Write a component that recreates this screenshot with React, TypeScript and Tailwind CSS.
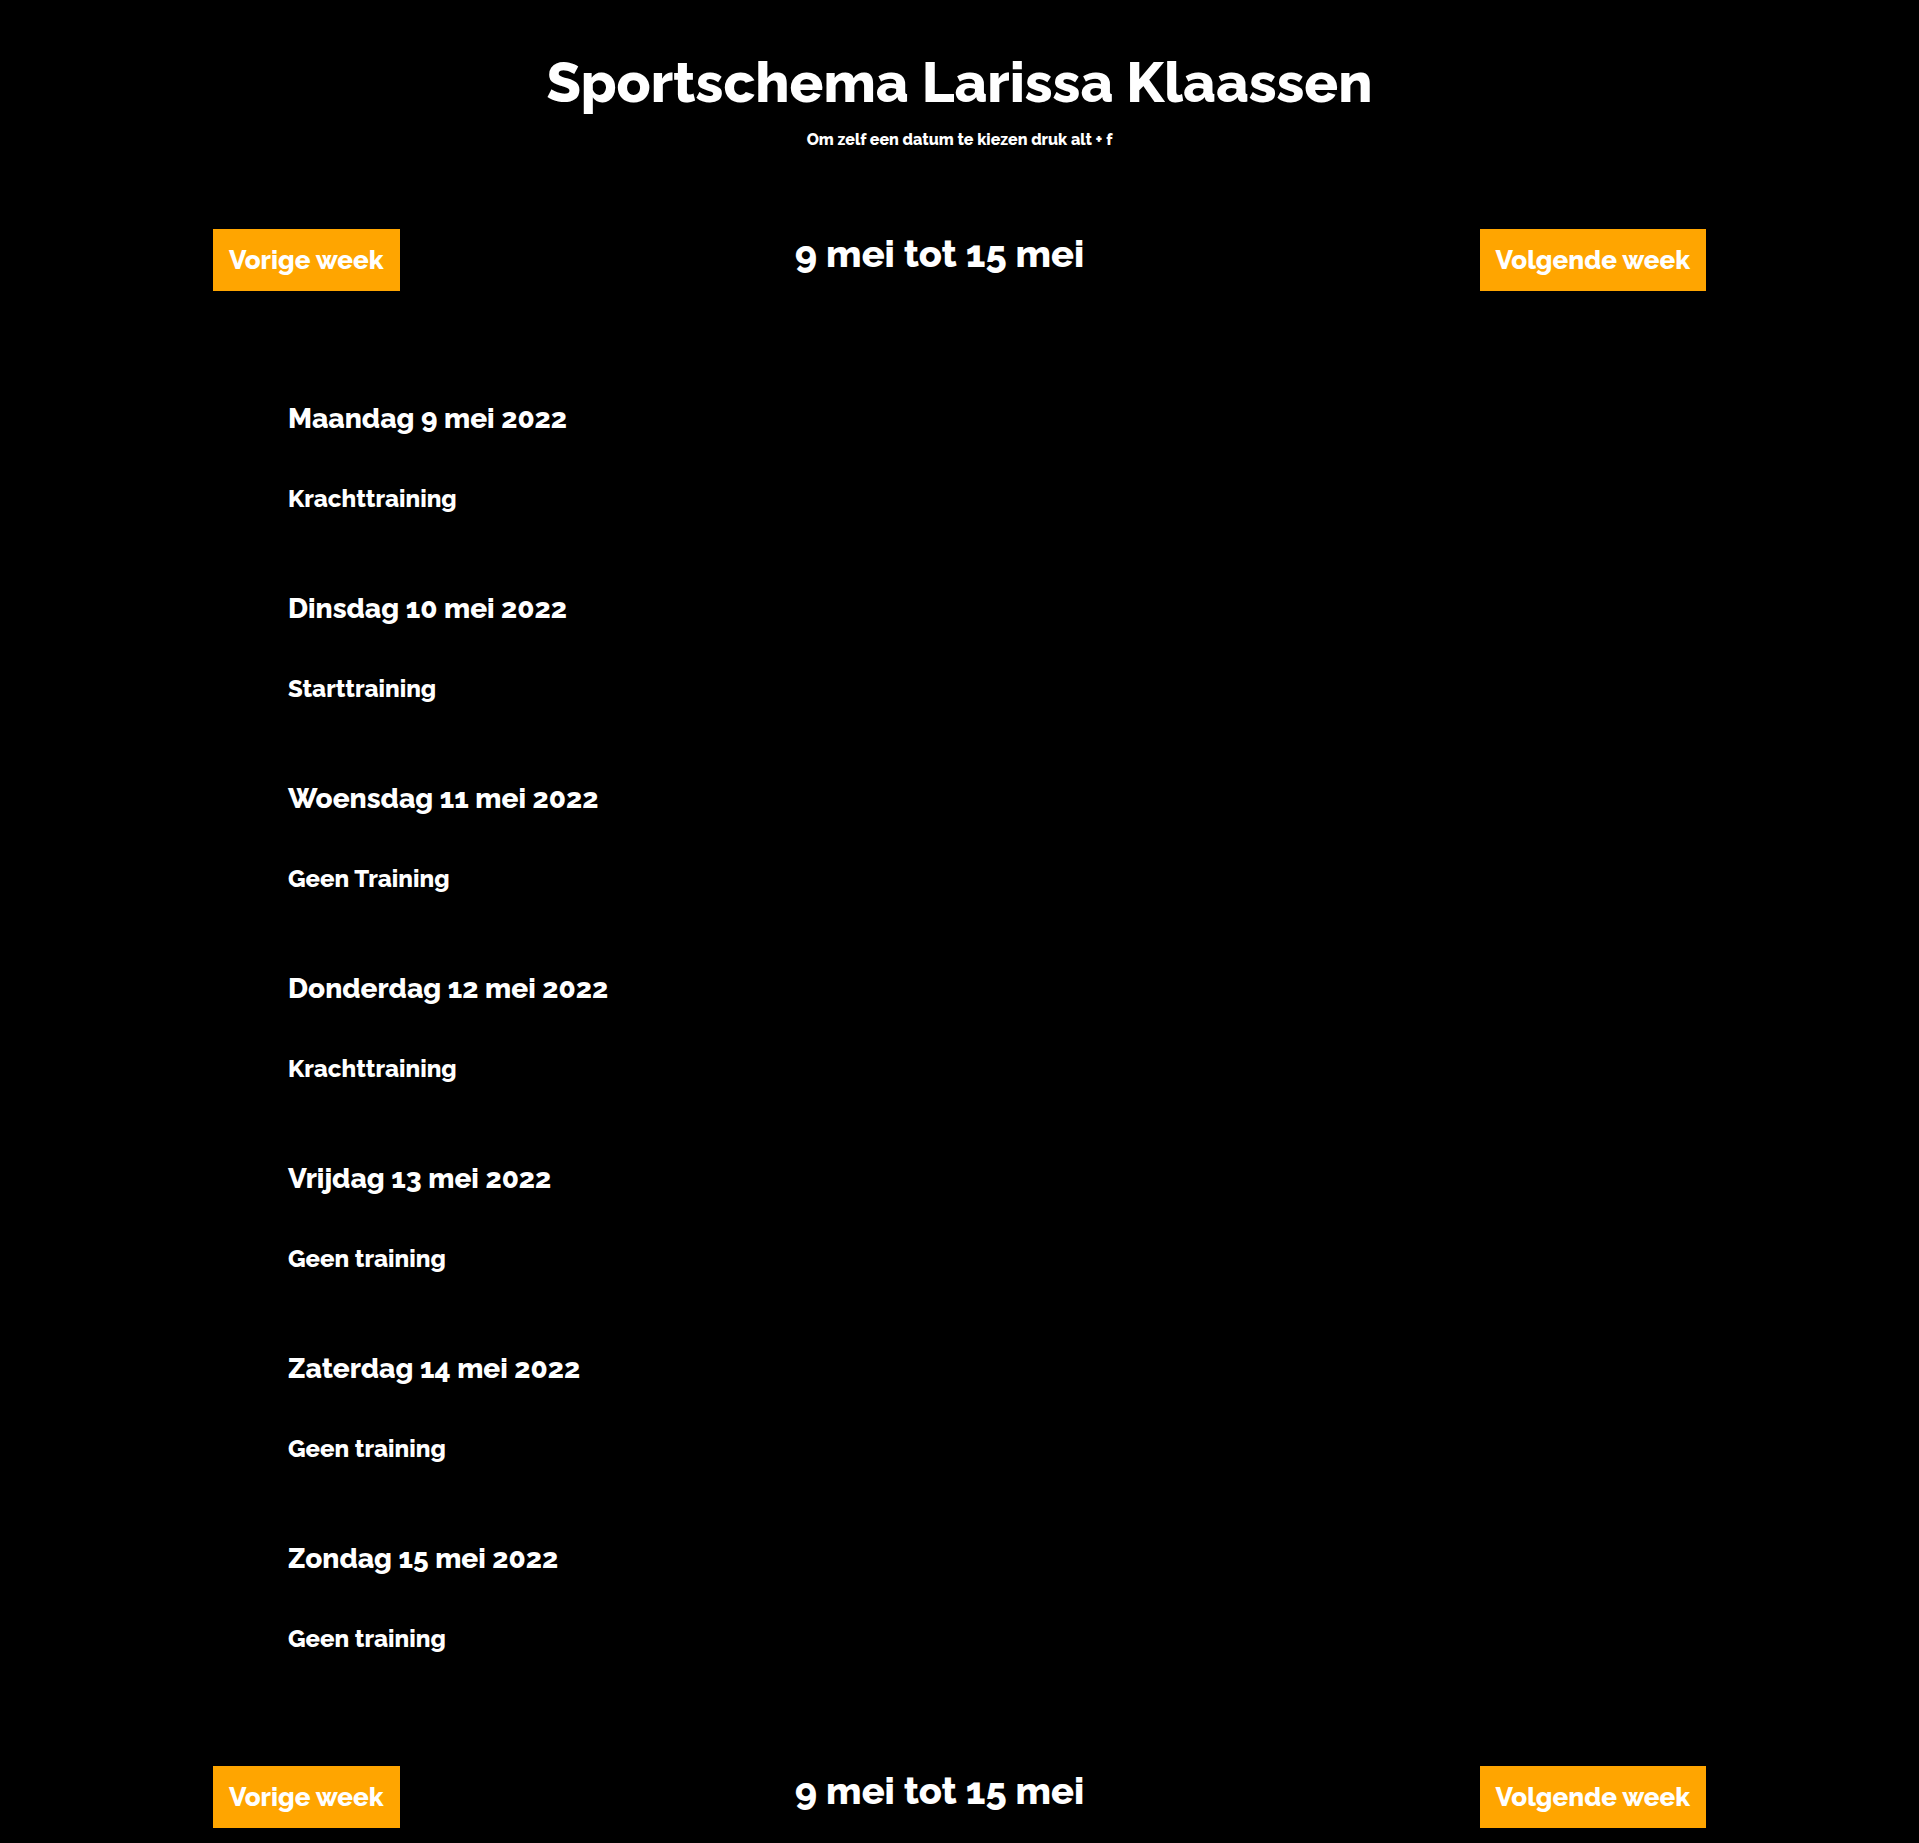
import React from "react";

interface Day {
  date: string;
  activity: string;
}

const days: Day[] = [
  { date: "Maandag 9 mei 2022", activity: "Krachttraining" },
  { date: "Dinsdag 10 mei 2022", activity: "Starttraining" },
  { date: "Woensdag 11 mei 2022", activity: "Geen Training" },
  { date: "Donderdag 12 mei 2022", activity: "Krachttraining" },
  { date: "Vrijdag 13 mei 2022", activity: "Geen training" },
  { date: "Zaterdag 14 mei 2022", activity: "Geen training" },
  { date: "Zondag 15 mei 2022", activity: "Geen training" },
];

// Week navigation, used above and below the schedule
const WeekNav: React.FC = () => (
  <div className="flex items-start justify-between">
    <button className="bg-[#ffa500] px-4 h-[62px] text-[26px] font-extrabold text-white">
      Vorige week
    </button>
    <h2 className="text-[38px] font-extrabold leading-[44px] mt-[3px]">9 mei tot 15 mei</h2>
    <button className="bg-[#ffa500] px-4 h-[62px] text-[26px] font-extrabold text-white">
      Volgende week
    </button>
  </div>
);

export default function App() {
  return (
    <div className="min-h-[1843px] bg-black text-white font-['Raleway','Lato',sans-serif] pb-[16px]">
      {/* Header */}
      <header className="flex flex-col items-center pt-[44px]">
        <h1 className="text-[56px] font-extrabold leading-[76px]">Sportschema Larissa Klaassen</h1>
        <p className="text-[16px] font-extrabold leading-[16px] mt-[12px]">Om zelf een datum te kiezen druk alt + f</p>
      </header>

      <div className="w-[1493px] mx-auto">
        <div className="mt-[81px]">
          <WeekNav />
        </div>

        {/* Schedule */}
        <ul className="pl-[75px] mt-[112px] flex flex-col gap-[82px]">
          {days.map((day, i) => (
            <li key={i} className="flex flex-col">
              <h3 className="text-[28px] font-extrabold leading-[32px]">{day.date}</h3>
              <p className="text-[24px] font-extrabold leading-[24px] mt-[52px]">{day.activity}</p>
            </li>
          ))}
        </ul>

        <div className="mt-[115px]">
          <WeekNav />
        </div>
      </div>
    </div>
  );
}
